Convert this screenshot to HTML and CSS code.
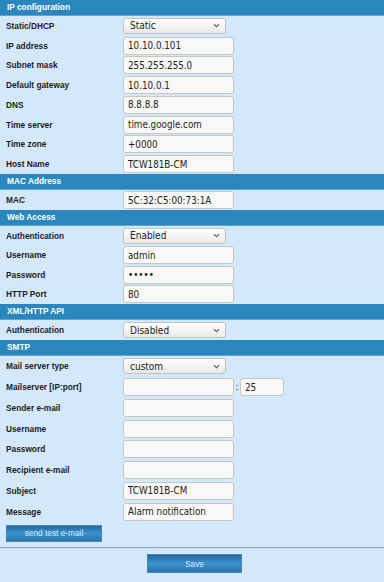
FILE: index.html
```html
<!DOCTYPE html>
<html lang="en">
<head>
  <meta charset="UTF-8">
  <title>Network settings</title>
  <link rel="stylesheet" href="styles.css">
</head>
<body>

<div class="page">
  <div class="section ip">
    <div class="section-title">IP configuration</div>
    <div class="row">
      <span class="label">Static/DHCP</span>
      <div class="select"><span>Static</span><svg class="chev" width="7" height="5" viewBox="0 0 7 5"><path d="M1 1.2 L3.5 3.6 L6 1.2" fill="none" stroke="#666" stroke-width="1.2"/></svg></div>
    </div>
    <div class="row"><span class="label">IP address</span><input class="field" type="text" value="10.10.0.101"></div>
    <div class="row"><span class="label">Subnet mask</span><input class="field" type="text" value="255.255.255.0"></div>
    <div class="row"><span class="label">Default gateway</span><input class="field" type="text" value="10.10.0.1"></div>
    <div class="row"><span class="label">DNS</span><input class="field" type="text" value="8.8.8.8"></div>
    <div class="row"><span class="label">Time server</span><input class="field" type="text" value="time.google.com"></div>
    <div class="row"><span class="label">Time zone</span><input class="field" type="text" value="+0000"></div>
    <div class="row"><span class="label">Host Name</span><input class="field" type="text" value="TCW181B-CM"></div>
  </div>

  <div class="section mac">
    <div class="section-title">MAC Address</div>
    <div class="row"><span class="label">MAC</span><input class="field" type="text" value="5C:32:C5:00:73:1A"></div>
  </div>

  <div class="section web">
    <div class="section-title">Web Access</div>
    <div class="row">
      <span class="label">Authentication</span>
      <div class="select"><span>Enabled</span><svg class="chev" width="7" height="5" viewBox="0 0 7 5"><path d="M1 1.2 L3.5 3.6 L6 1.2" fill="none" stroke="#666" stroke-width="1.2"/></svg></div>
    </div>
    <div class="row"><span class="label">Username</span><input class="field" type="text" value="admin"></div>
    <div class="row"><span class="label">Password</span><input class="field" type="password" value="admin"></div>
    <div class="row"><span class="label">HTTP Port</span><input class="field" type="text" value="80"></div>
  </div>

  <div class="section xml">
    <div class="section-title">XML/HTTP API</div>
    <div class="row">
      <span class="label">Authentication</span>
      <div class="select"><span>Disabled</span><svg class="chev" width="7" height="5" viewBox="0 0 7 5"><path d="M1 1.2 L3.5 3.6 L6 1.2" fill="none" stroke="#666" stroke-width="1.2"/></svg></div>
    </div>
  </div>

  <div class="section smtp">
    <div class="section-title">SMTP</div>
    <div class="row">
      <span class="label">Mail server type</span>
      <div class="select"><span>custom</span><svg class="chev" width="7" height="5" viewBox="0 0 7 5"><path d="M1 1.2 L3.5 3.6 L6 1.2" fill="none" stroke="#666" stroke-width="1.2"/></svg></div>
    </div>
    <div class="row">
      <span class="label">Mailserver [IP:port]</span>
      <input class="field" type="text" value="">
      <span class="colon">:</span>
      <input class="field port" type="text" value="25">
    </div>
    <div class="row"><span class="label">Sender e-mail</span><input class="field" type="text" value=""></div>
    <div class="row"><span class="label">Username</span><input class="field" type="text" value=""></div>
    <div class="row"><span class="label">Password</span><input class="field" type="password" value=""></div>
    <div class="row"><span class="label">Recipient e-mail</span><input class="field" type="text" value=""></div>
    <div class="row"><span class="label">Subject</span><input class="field" type="text" value="TCW181B-CM"></div>
    <div class="row"><span class="label">Message</span><input class="field" type="text" value="Alarm notification"></div>
    <div class="test-row"><button class="btn test">send test e-mail</button></div>
  </div>

  <div class="footer">
    <button class="btn save">Save</button>
  </div>
</div>

</body>
</html>
```

FILE: styles.css
```css
body {
  margin: 0;
  padding: 0;
  background-color: #d4e8fb;
  font-family: "Liberation Sans", Arial, sans-serif;
  color: #1c1c1c;
}
.page {
  width: 100%;
}
.section-title {
  height: 15px;
  line-height: 15px;
  padding-left: 7px;
  background-color: #2a87bd;
  border-bottom: 1px solid #5ba5d5;
  color: #fff;
  font-size: 8.3px;
  font-weight: bold;
}
.row {
  display: flex;
  align-items: center;
  height: 19.75px;
  padding-left: 6px;
}
.mac .row, .xml .row {
  height: 20px;
}
.web .row {
  height: 19.5px;
}
.smtp .row {
  height: 20.75px;
}
.label {
  width: 117px;
  flex-shrink: 0;
  font-size: 8.3px;
  font-weight: bold;
}
.field {
  box-sizing: border-box;
  width: 111px;
  height: 18px;
  margin: 0;
  padding: 0 4px;
  border: 1px solid #c6c6c4;
  border-radius: 3px;
  background-color: #f8f8f6;
  font-family: "DejaVu Sans Condensed", "Liberation Sans", sans-serif;
  font-size: 9.75px;
  color: #222;
  outline: none;
}
.field.port {
  width: 44px;
}
.colon {
  width: 6px;
  text-align: center;
  font-size: 9px;
}
.select {
  box-sizing: border-box;
  width: 103px;
  height: 16px;
  display: flex;
  align-items: center;
  justify-content: space-between;
  padding: 0 5px 0 6px;
  border: 1px solid #c2c2c2;
  border-radius: 3px;
  background: linear-gradient(#ffffff, #e9e9e7);
  font-family: "DejaVu Sans Condensed", "Liberation Sans", sans-serif;
  font-size: 10px;
  color: #222;
}
.chev {
  display: block;
}
.test-row {
  padding: 0 6px;
  height: 25px;
}
.btn {
  box-sizing: border-box;
  margin: 0;
  padding: 0;
  border: 1px solid #4c86b2;
  background: linear-gradient(#2467a0, #3a95cd 50%, #2a72ab);
  color: #d6e7f4;
  font-family: "Liberation Sans", Arial, sans-serif;
  font-size: 8.3px;
  cursor: pointer;
}
.btn.test {
  width: 96px;
  height: 17px;
}
.footer {
  border-top: 1px solid #8aa1b4;
  padding-top: 6px;
  display: flex;
  justify-content: center;
}
.btn.save {
  width: 95px;
  height: 19px;
  margin-left: 5px;
}
```
